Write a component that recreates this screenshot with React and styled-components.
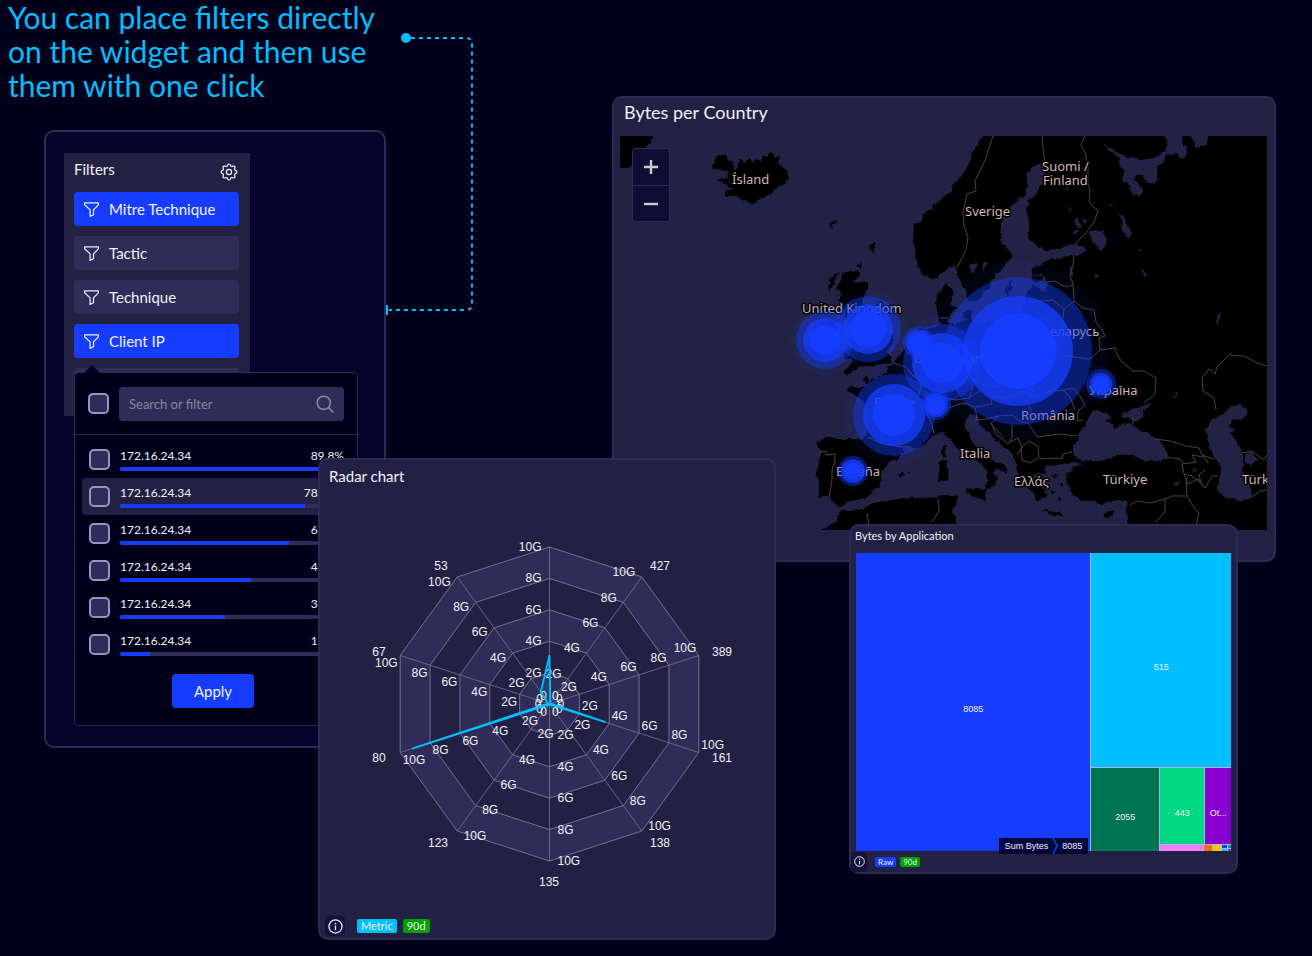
import React from "react";
import styled, { createGlobalStyle, css } from "styled-components";

const color = {
  page: "#01001a",
  frame: "#04042d",
  panel: "#222144",
  raised: "#2f2d57",
  line: "#2d2b56",
  blue: "#163dff",
  cyan: "#00bfff",
  green: "#00a000",
  check: "#8f9ac4",
  text: "#f1f1f7",
  mute: "#86859f",
};

const GlobalStyle = createGlobalStyle`
  *, *::before, *::after { box-sizing: border-box; }
  body {
    margin: 0;
    min-height: 100vh;
    background: ${color.page};
    color: ${color.text};
    font-family: Lato, "Open Sans", sans-serif;
  }
  button, input { font: inherit; color: inherit; }
  h1, h2, ul { margin: 0; padding: 0; font-weight: 400; }
`;

/* Overlapping panels share one grid; spans decide where they stack. */
const Stage = styled.main`
  display: grid;
  grid-template-columns:
    minmax(0, 44fr) minmax(0, 274fr) minmax(0, 68fr) minmax(0, 226fr) minmax(0, 164fr)
    minmax(0, 73fr) minmax(0, 389fr) minmax(0, 38fr) minmax(0, 36fr);
  grid-template-rows: 96px 34px 328px 66px 38px 186px 126px 66px;
  padding-bottom: 16px;
`;

const Headline = styled.h1`
  grid-column: 1 / 5;
  grid-row: 1 / 3;
  padding: 0 8px;
  font-size: 30px;
  line-height: 34px;
  white-space: pre-line;
  color: ${color.cyan};
`;

const Card = styled.section`
  display: flex;
  flex-direction: column;
  min-width: 0;
  border: 2px solid ${color.line};
  border-radius: 10px;
  background: ${color.panel};
`;

const FilterCard = styled(Card)`
  grid-column: 2 / 4;
  grid-row: 3 / 7;
  position: relative;
  align-items: flex-start;
  padding: 21px 18px;
  background: ${color.frame};
`;

const MapCard = styled(Card)`
  grid-column: 5 / 9;
  grid-row: 2 / 6;
  padding: 0 7px 30px 6px;
`;

const RadarCard = styled(Card)`
  grid-column: 3 / 6;
  grid-row: 4 / 9;
  z-index: 2;
`;

const TreeCard = styled(Card)`
  grid-column: 7 / 8;
  grid-row: 5 / 8;
  z-index: 2;
`;

const CardTitle = styled.h2`
  flex: none;
  height: ${(p) => p.$height}px;
  padding: 0 ${(p) => p.$inset}px;
  font-size: ${(p) => p.$size}px;
  line-height: ${(p) => p.$line}px;
`;

const Connector = styled.svg`
  position: absolute;
  left: 100%;
  top: -102px;
  width: 92px;
  height: 292px;
  pointer-events: none;
`;

/* ---------- filters ---------- */

const Sidebar = styled.div`
  position: relative;
  display: flex;
  flex-direction: column;
  gap: 10px;
  width: 186px;
  height: 263px;
  padding: 7px 11px 0 10px;
  background: ${color.panel};
`;

const SidebarHead = styled.div`
  display: flex;
  justify-content: space-between;
  align-items: flex-start;
  height: 22px;
`;

const SidebarTitle = styled.h2`
  font-size: 15px;
  line-height: 18px;
`;

const IconButton = styled.button`
  display: grid;
  place-items: center;
  width: ${(p) => (p.$small ? 16 : 20)}px;
  height: 20px;
  margin-top: 2px;
  padding: 0;
  border: 0;
  border-radius: 4px;
  background: ${(p) => (p.$dark ? "#141238" : "none")};
`;

const FilterButton = styled.button`
  flex: none;
  display: flex;
  align-items: center;
  gap: 10px;
  height: 34px;
  padding: 0 10px;
  border: 0;
  border-radius: 4px;
  background: ${(p) => (p.$active ? color.blue : color.raised)};
  font-size: 15px;
  line-height: 18px;
  text-align: left;
`;

const FilterStub = styled.div`
  flex: none;
  height: 34px;
  border-radius: 4px;
  background: ${color.raised};
`;

const Popover = styled.div`
  position: absolute;
  left: 10px;
  top: 219px;
  width: 284px;
  height: 354px;
  display: flex;
  flex-direction: column;
  border: 1px solid ${color.line};
  border-radius: 5px;
  background: ${color.page};
`;

const Pointer = styled.svg`
  position: absolute;
  left: 8px;
  top: -8px;
  width: 18px;
  height: 9px;
`;

const SearchRow = styled.div`
  display: flex;
  align-items: center;
  gap: 10px;
  height: 62px;
  padding: 0 13px;
  border-bottom: 1px solid ${color.line};
`;

const Check = styled.input.attrs({ type: "checkbox" })`
  appearance: none;
  flex: none;
  width: 21px;
  height: 21px;
  margin: 0;
  border: 2px solid ${color.check};
  border-radius: 5px;
  background: ${color.raised};
  &:checked { background: ${color.blue}; }
`;

const SearchBox = styled.label`
  flex: 1;
  display: flex;
  align-items: center;
  height: 34px;
  padding: 0 10px;
  border-radius: 4px;
  background: ${color.raised};
`;

const SearchInput = styled.input`
  flex: 1;
  min-width: 0;
  padding: 0;
  border: 0;
  outline: 0;
  background: none;
  font-size: 13px;
  &::placeholder { color: ${color.mute}; opacity: 1; }
`;

const IpList = styled.ul`
  list-style: none;
  padding: 6px 0 0 7px;
`;

const IpRow = styled.li`
  display: flex;
  align-items: center;
  gap: 10px;
  height: 37px;
  padding: 0 13px 0 7px;
  border-radius: 4px;
  ${(p) => p.$hover && css`background: ${color.panel};`}
`;

const IpBody = styled.label`
  flex: 1;
  display: flex;
  flex-direction: column;
  gap: 4px;
  font-size: 12px;
  line-height: 14px;
`;

const IpText = styled.span`
  display: flex;
  justify-content: space-between;
`;

const Track = styled.span`
  display: block;
  height: 4px;
  border-radius: 2px;
  background: ${color.raised};
`;

const Fill = styled.span`
  display: block;
  height: 4px;
  border-radius: 2px 0 0 2px;
  background: ${color.blue};
`;

const ApplyButton = styled.button`
  width: 82px;
  height: 34px;
  margin: 11px 0 0 97px;
  padding: 0;
  border: 0;
  border-radius: 4px;
  background: ${color.blue};
  font-size: 15px;
`;

/* ---------- map ---------- */

const MapFrame = styled.div`
  flex: 1;
  position: relative;
  min-height: 0;
  overflow: hidden;
`;

const MapSvg = styled.svg`
  display: block;
  width: 100%;
  height: 100%;
`;

const Zoom = styled.div`
  position: absolute;
  left: 12px;
  top: 12px;
  display: flex;
  flex-direction: column;
  width: 38px;
  border: 1px solid ${color.line};
  border-radius: 3px;
  background: #100d35;
`;

const ZoomButton = styled.button`
  display: grid;
  place-items: center;
  height: 36px;
  padding: 0;
  border: 0;
  background: none;
  & + & { border-top: 1px solid ${color.line}; }
`;

const Place = styled.text`
  font-family: "Noto Sans", sans-serif;
  font-size: 13px;
  fill: #cfb6b3;
  stroke: #000;
  stroke-width: 3px;
  stroke-linejoin: round;
  paint-order: stroke;
`;

/* ---------- charts ---------- */

const RadarSvg = styled.svg`
  flex: 1;
  min-height: 0;
  width: 100%;
  font-family: "Liberation Sans", Arial, sans-serif;
  font-size: 12px;
  fill: ${color.text};
`;

const CardFooter = styled.footer`
  flex: none;
  display: flex;
  align-items: center;
  gap: ${(p) => p.$gap}px;
  height: ${(p) => p.$height}px;
  padding: 0 ${(p) => p.$inset}px;
  & ${IconButton} { margin: 0 ${(p) => p.$gap}px 0 0; }
`;

const Tag = styled.span`
  height: ${(p) => (p.$small ? 10 : 14)}px;
  padding: 0 ${(p) => (p.$small ? 3 : 4)}px;
  border-radius: 2px;
  background: ${(p) => p.$fill};
  font-size: ${(p) => (p.$small ? 8 : 11)}px;
  line-height: ${(p) => (p.$small ? 10 : 14)}px;
`;

const TreeMap = styled.div`
  flex: 1;
  position: relative;
  display: grid;
  grid-template-columns: 235fr 140fr;
  gap: 1px;
  min-height: 0;
  margin: 0 5px;
  background: #a9b6f2;
  font-family: "Liberation Sans", Arial, sans-serif;
  font-size: 9px;
`;

const Split = styled.div`
  display: grid;
  grid-template-columns: ${(p) => p.$columns || "none"};
  grid-template-rows: ${(p) => p.$rows || "none"};
  gap: 1px;
  min-width: 0;
  min-height: 0;
`;

const Tile = styled.div`
  display: grid;
  place-items: center;
  min-width: 0;
  min-height: 0;
  padding-top: ${(p) => (p.$lead ? 14 : 0)}px;
  background: ${(p) => p.$fill};
`;

const Crumb = styled.div`
  position: absolute;
  left: 143px;
  bottom: -3px;
  display: flex;
  align-items: center;
  justify-content: center;
  gap: 4px;
  width: 89px;
  height: 16px;
  white-space: nowrap;
  background: rgba(3, 3, 50, 0.92);
`;

/* ---------- icons ---------- */

const Funnel = () => (
  <svg width="15" height="15" viewBox="0 0 15 15" fill="none" stroke="#eef0ff" strokeWidth="1.2" strokeLinejoin="round">
    <path d="M.6.8h13.8v2L9.5 7.9v4.8l-3.4 1.7V7.9L.6 2.8z" />
  </svg>
);

const gearPath =
  Array.from({ length: 64 }, (_, i) => {
    const a = (i / 64) * Math.PI * 2;
    const r = 7 + Math.max(-0.8, Math.min(0.8, Math.cos(a * 8) * 1.3));
    return `${i ? "L" : "M"}${(9 + r * Math.sin(a)).toFixed(2)} ${(9 - r * Math.cos(a)).toFixed(2)}`;
  }).join("") + "Z";

const Gear = () => (
  <svg width="18" height="18" viewBox="0 0 18 18" fill="none" stroke="#eef0ff" strokeWidth="1.2" strokeLinejoin="round">
    <path d={gearPath} />
    <circle cx="9" cy="9" r="2.6" />
  </svg>
);

const Magnifier = () => (
  <svg width="18" height="18" viewBox="0 0 18 18" fill="none" stroke={color.mute} strokeWidth="1.6" strokeLinecap="round">
    <circle cx="7.8" cy="7.8" r="6.6" />
    <path d="M12.6 12.6 17 17" />
  </svg>
);

const Info = ({ size }) => (
  <svg width={size} height={size} viewBox="0 0 16 16" fill="none" stroke="#eef0ff" strokeWidth="1.4">
    <circle cx="8" cy="8" r="7" />
    <path d="M8 7v5M8 4v1.6" />
  </svg>
);

/* ---------- data ---------- */

const filters = [
  { label: "Mitre Technique", active: true },
  { label: "Tactic" },
  { label: "Technique" },
  { label: "Client IP", active: true },
];

const addresses = [
  { share: "89.8%", bar: 92 },
  { share: "78.14%", bar: 82.6, hover: true },
  { share: "67.1%", bar: 75.4 },
  { share: "45.1%", bar: 58.7 },
  { share: "33.2%", bar: 47 },
  { share: "11.1%", bar: 13.4 },
];

const continent =
  "M982 120V136L978 145 972 153 970 163 965 170 960 178 953 185 950 193 943 198 935 203 932 209 925 213 921 220 915 223 913 240 915 249 916 257 918 266 920 272 926 277 932 279 938 277 943 272 949 267 955 265 957 273 960 280 963 288 967 293 968 301 976 301 983 294 989 288 992 280 998 273 1003 268 1007 263 1012 258 1012 255 1007 249 1002 243 1000 235 1001 227 1004 216 1010 207 1016 203 1020 197 1026 194 1027 187 1027 180 1028 173 1032 167 1037 165 1042 165 1046 168 1045 180 1041 187 1037 193 1031 198 1027 205 1028 214 1029 223 1029 230 1028 237 1032 243 1037 247 1046 250 1053 250 1060 248 1067 246 1075 244 1080 246 1087 250 1080 254 1073 256 1065 257 1057 258 1050 259 1043 263 1039 267 1040 272 1044 277 1048 282 1047 290 1042 291 1035 285 1028 290 1026 297 1025 303 1022 313 1010 316 1000 318 990 320 980 323 970 319 962 322 955 325 948 322 950 314 957 309 951 304 953 290 946 284 938 293 936 304 938 315 941 324 933 328 925 328 918 330 912 336 907 345 900 355 895 362 888 368 885 373 876 378 870 381 866 376 863 378 866 386 858 388 850 386 848 390 852 394 860 398 866 405 869 413 868 422 866 435 862 440 850 439 838 439 830 437 824 438 818 441 818 446 821 452 819 462 816 475 819 482 819 497 829 497 833 501 838 506 843 506 848 501 857 500 866 497 872 492 880 487 881 481 880 475 884 468 889 463 897 459 903 452 903 445 908 446 917 448 925 444 930 438 936 434 942 432 948 436 952 443 958 449 967 456 975 460 982 464 986 471 989 480 985 487 989 489 994 484 997 478 993 473 997 468 1003 470 1008 473 1007 468 1000 463 992 460 985 455 978 449 972 442 969 435 966 428 965 420 971 414 977 417 979 424 986 431 993 438 1001 444 1009 450 1016 459 1016 468 1020 477 1025 483 1029 489 1034 493 1036 501 1042 497 1048 499 1046 491 1039 484 1034 477 1037 472 1045 474 1044 467 1052 465 1060 463 1067 465 1075 463 1072 470 1067 473 1066 480 1070 487 1071 494 1077 498 1085 502 1091 500 1100 504 1110 502 1119 500 1128 500 1127 510 1128 519 1125 530V545H1285V120Z";

const islands = [
  "M605 120H652V136L649 145 640 150 634 160 627 168 605 169Z",
  "M712 168L718 155 725 155 728 160 734 162 734 170 737 168 740 159 745 163 749 157 753 162 757 159 762 163 762 156 768 157 767 153 773 153 775 158 780 155 779 163 787 170 788 177 785 184 778 187 772 193 761 198 753 204 742 200 734 196 725 196 725 192 732 190 728 185 717 181 718 179 728 177 727 171 720 170Z",
  "M829 223L836 220 837 222 833 225 834 232 832 228Z",
  "M873 242L876 242 873 253 869 249Z",
  "M858 265L862 263 861 269 857 268Z",
  "M843 272L858 271 860 275 852 282 868 283 868 290 862 301 868 311 877 322 882 331 893 335 893 345 886 352 891 358 890 363 877 365 860 367 848 374 842 372 850 365 856 361 845 358 844 353 852 346 848 338 856 331 853 322 845 319 846 309 838 300 841 292 836 290Z",
  "M830 280L838 273 836 281 831 287 829 294Z",
  "M812 329L822 322 834 321 840 333 837 349 825 356 812 358 806 352 811 342Z",
  "M962 312L972 309 971 319 963 319Z",
  "M1006 289L1012 280 1012 288 1006 298Z",
  "M1032 268L1041 265 1040 273 1034 277Z M1031 278L1042 275 1043 280 1034 283Z",
  "M942 447L946 443 947 455 942 458Z",
  "M939 462L947 460 948 468 947 480 939 482Z",
  "M966 489L976 490 987 488 986 496 986 501 977 497 966 492Z",
  "M898 475L904 471 905 474 901 478Z M908 472L911 473 909 474Z M889 481L891 481 890 483Z",
  "M822 545V530L830 525 837 521 840 510 848 511 858 510 870 505 883 502 897 499 912 497 925 499 937 497 947 495 957 497 956 505 951 512 957 520 956 545Z",
  "M1042 510L1050 511 1062 513 1062 515 1050 515Z",
  "M1103 514L1109 512 1116 509 1113 515 1106 518Z",
  "M1052 474L1058 475 1054 479Z M1059 484L1063 482 1061 487Z M1051 490L1056 492 1052 495Z M1058 497L1062 499 1059 501Z",
];

const seas = [
  "M1097 410L1105 412 1111 418 1105 421 1113 424 1113 428 1118 427 1128 423 1134 425 1139 430 1148 434 1158 440 1166 448 1168 455 1165 460 1158 462 1150 460 1142 460 1135 456 1128 454 1118 455 1110 459 1100 461 1088 461 1078 459 1073 454 1073 446 1077 440 1078 433 1084 428 1088 418 1092 411Z",
  "M1121 414L1130 409 1138 408 1150 403 1149 407 1143 411 1143 417 1136 422 1128 418 1121 418Z",
  "M1069 465L1075 462 1083 464 1077 467Z",
  "M1230 406L1240 405 1248 408 1247 414 1241 420 1233 420 1228 427 1235 429 1231 433 1235 441 1240 446 1243 455 1243 463 1242 470 1250 484 1252 497 1240 501 1228 498 1219 492 1217 485 1221 477 1222 467 1216 459 1210 449 1208 440 1205 430 1212 420 1222 415Z",
  "M1245 455L1251 451 1257 460 1250 465 1245 462Z",
  "M1103 143L1117 152 1128 157 1140 160 1153 158 1164 152 1168 146 1165 136V120H1182L1182 145 1187 146 1185 157 1180 159 1177 153 1167 155 1162 164 1157 167 1158 180 1152 184 1145 181 1142 175 1136 175 1135 180 1142 190 1140 197 1132 193 1130 186 1122 180 1124 172 1119 165 1120 158 1110 151Z",
  "M1190 120H1210L1208 145 1197 147 1190 136Z",
  "M1088 232L1096 230 1103 232 1107 240 1103 252 1098 249 1093 243Z",
  "M1118 213L1124 217 1127 225 1132 233 1128 239 1121 229 1123 222Z",
  "M969 264L978 262 976 271 971 273Z M983 264L988 261 984 272Z M1069 268L1072 266 1072 279 1070 275Z",
  "M1140 268L1145 272 1149 275 1145 277Z M1094 274L1099 275 1096 278Z M1110 204L1114 203 1112 207Z M1138 249L1142 250 1139 252Z",
  "M1074 220L1078 217 1081 226 1077 229Z M1082 218L1088 221 1084 225Z M1072 231L1080 230 1076 234Z M1063 189L1070 187 1067 190Z M1070 206L1073 212 1070 211Z",
  "M1216 318L1223 311 1221 315 1217 326Z M1171 397L1178 391 1177 396Z M1173 484L1180 481 1178 486Z M1193 467L1196 470 1194 473Z",
];

const borders = [
  "M993 136L985 160 975 181 976 191 967 194 963 213 964 226 968 237 966 250 957 268",
  "M1042 136L1044 158 1047 165",
  "M1085 136L1081 145 1086 155 1088 170 1088 183 1090 192 1089 202 1098 211 1094 222 1085 234 1075 244",
  "M1074 256L1073 265 1070 276 1073 284 1068 287 1061 285 1055 281 1047 282",
  "M1073 284L1074 301 1083 308 1094 310 1096 322 1102 330 1105 336 1099 338 1100 350",
  "M1028 302L1043 301 1053 300 1064 309 1074 301 M1064 309L1062 325 1055 341 1060 355 1090 359 1100 350 1115 348 1118 356 1122 362 1133 371 1144 371 1156 378 1155 394 1144 403",
  "M1024 318L1040 320 1053 316",
  "M893 363L906 367 913 376 922 382 M913 376L923 368 918 356 923 340",
  "M922 382L918 397 925 403 932 400 945 398 956 400 969 398 983 389 990 396 M969 398L973 386 966 376 983 385 997 387 1010 381",
  "M934 434L932 424 927 414 926 404 M932 400L942 410 954 406 963 403 975 407 977 419",
  "M868 437L880 443 890 445 902 447",
  "M820 452L826 451 826 455 835 454 835 461 832 470 832 480 829 497",
  "M976 407L992 404 990 396 1008 398 1020 393 1034 389 M975 420L987 419 998 416 1012 415 M991 422L996 434 1008 444 1012 438 1012 425 M998 416L991 424 1004 438",
  "M1012 415L1020 421 1028 423 1034 432 1037 437 1060 434 1077 436 M1034 389L1027 402 1032 412 1030 422",
  "M1020 391L1040 397 1050 391 1063 390 1073 388 1080 396 1085 405 1078 411 1077 421 1083 420 M1063 390L1070 397 1075 410",
  "M1022 447L1029 441 1038 446 1039 457 1030 463 1022 460 1021 450Z M1010 442L1018 438 1022 447 1017 455 M1039 459L1053 458 1062 459 1063 454 1072 452",
  "M1155 439L1170 441 1186 446 1199 448 1202 455 1214 459 M1166 457L1180 459 1183 464 1196 462 1192 455 1204 457 1208 463 M1182 464L1184 474 1192 476 1201 483 1199 475 1205 470 M1184 474L1188 484 1198 479 1205 488 1212 476 1218 476",
  "M1130 505L1137 501 1150 503 1165 499 1172 496 1187 496 1186 481 1188 477 M1187 496L1194 508 1199 513 1195 530 M1165 499L1165 512 1155 523",
  "M1216 410L1214 398 1203 391 1202 378 1209 369 1215 374 1217 367 1229 355 1244 356 1257 363 1267 366",
  "M1242 453L1252 451 1257 455 1264 460 1267 455 M1252 497L1260 491 1267 490",
  "M938 499L939 511 932 522 M867 513L869 527 M940 318L948 318 M1133 418V424",
];

const places = [
  [732, 184, "Ísland"],
  [1042, 171, "Suomi /"],
  [1043, 185, "Finland"],
  [965, 216, "Sverige"],
  [802, 313, "United Kingdom"],
  [1042, 336, "Беларусь"],
  [1089, 395, "Україна"],
  [1021, 420, "România"],
  [960, 458, "Italia"],
  [1014, 486, "Ελλάς"],
  [1103, 484, "Türkiye"],
  [1242, 484, "Türk"],
  [836, 476, "España"],
  [914, 363, "Deutschland"],
  [874, 407, "France"],
];

/* centre x, centre y, then the core, middle and outer radii */
const bubbles = [
  [825, 340, 15, 22, 29],
  [868, 329, 18, 25, 33],
  [919, 343, 10, 13, 16],
  [942, 363, 20, 30, 39],
  [894, 415, 21, 31, 41],
  [936, 405, 9, 12, 15],
  [1018, 351, 38, 55, 74],
  [853, 471, 8, 12, 15],
  [1101, 384, 8, 11, 15],
];

const radar = { cx: 549.5, cy: 704, r: 157 };
const ticks = [0, 2, 4, 6, 8, 10];
const radarValues = [3.1, 0.1, 0.1, 3.75, 0.05, 0.05, 0.05, 9.2, 0.1, 0.95];
const radarNames = [
  [660, 570, "427"],
  [722, 656, "389"],
  [722, 762, "161"],
  [660, 847, "138"],
  [549, 886, "135"],
  [438, 847, "123"],
  [379, 762, "80"],
  [379, 656, "67"],
  [441, 570, "53"],
];

const radarPoint = (axis, value) => {
  const a = (axis * Math.PI) / 5;
  const d = (radar.r * value) / 10;
  return [radar.cx + d * Math.sin(a), radar.cy - d * Math.cos(a)];
};
const ring = (value) => radarValues.map((_, i) => radarPoint(i, value).join()).join(" ");

/* ---------- views ---------- */

function Filters() {
  return (
    <FilterCard aria-label="Filters">
      <Sidebar>
        <SidebarHead>
          <SidebarTitle>Filters</SidebarTitle>
          <IconButton aria-label="Filter settings"><Gear /></IconButton>
        </SidebarHead>
        {filters.map((f) => (
          <FilterButton key={f.label} $active={f.active}>
            <Funnel />
            {f.label}
          </FilterButton>
        ))}
        <FilterStub />
        <Popover>
          <Pointer viewBox="0 0 18 9"><path d="M0 9 9 0l9 9z" fill={color.page} /></Pointer>
          <SearchRow>
            <Check aria-label="Select all" />
            <SearchBox>
              <SearchInput aria-label="Search or filter" placeholder="Search or filter" />
              <Magnifier />
            </SearchBox>
          </SearchRow>
          <IpList>
            {addresses.map((row, i) => (
              <IpRow key={row.share} $hover={row.hover}>
                <Check id={`ip-${i}`} />
                <IpBody htmlFor={`ip-${i}`}>
                  <IpText><span>172.16.24.34</span><span>{row.share}</span></IpText>
                  <Track><Fill style={{ width: `${row.bar}%` }} /></Track>
                </IpBody>
              </IpRow>
            ))}
          </IpList>
          <ApplyButton>Apply</ApplyButton>
        </Popover>
      </Sidebar>
      <Connector viewBox="384 30 92 292" fill="none" stroke={color.cyan} strokeWidth="2">
        <circle cx="406" cy="38" r="5" fill={color.cyan} stroke="none" />
        <path d="M411 38H466Q472 38 472 44V304Q472 310 466 310H389" strokeDasharray="4 4" />
        <path d="M387 305v10" />
      </Connector>
    </FilterCard>
  );
}

function CountryMap() {
  return (
    <MapCard>
      <CardTitle $height={38} $inset={4} $size={18} $line={28}>Bytes per Country</CardTitle>
      <MapFrame>
        <MapSvg viewBox="620 136 647 394" preserveAspectRatio="xMidYMid slice" role="img" aria-label="Map of Europe">
          <defs>
            <filter id="coast" filterUnits="userSpaceOnUse" x="600" y="116" width="690" height="434">
              <feTurbulence type="fractalNoise" baseFrequency="0.16" numOctaves="2" seed="4" />
              <feDisplacementMap in="SourceGraphic" scale="5" xChannelSelector="R" yChannelSelector="G" />
            </filter>
          </defs>
          <g filter="url(#coast)">
            <rect x="600" y="116" width="690" height="434" fill={color.panel} />
            <path d={continent} />
            {islands.map((d) => <path key={d} d={d} />)}
            {seas.map((d) => <path key={d} d={d} fill={color.panel} />)}
          </g>
          {borders.map((d) => <path key={d} d={d} fill="none" stroke="#5c463f" strokeWidth="0.9" />)}
          {places.map(([x, y, name]) => <Place key={name} x={x} y={y}>{name}</Place>)}
          {bubbles.map(([x, y, core, mid, outer]) => (
            <g key={x} fill={color.blue}>
              <circle cx={x} cy={y} r={outer * 1.22} opacity="0.06" />
              <circle cx={x} cy={y} r={outer} opacity="0.42" />
              <circle cx={x} cy={y} r={mid} opacity="0.75" />
              <circle cx={x} cy={y} r={core} />
            </g>
          ))}
        </MapSvg>
        <Zoom>
          <ZoomButton aria-label="Zoom in">
            <svg width="14" height="14" stroke="#ccc" strokeWidth="2.4"><path d="M0 7h14M7 0v14" /></svg>
          </ZoomButton>
          <ZoomButton aria-label="Zoom out">
            <svg width="14" height="14" stroke="#ccc" strokeWidth="2.4"><path d="M0 7h14" /></svg>
          </ZoomButton>
        </Zoom>
      </MapFrame>
    </MapCard>
  );
}

function Radar() {
  return (
    <RadarCard>
      <CardTitle $height={32} $inset={9} $size={15} $line={32}>Radar chart</CardTitle>
      <RadarSvg viewBox="320 492 454 422" role="img" aria-label="Radar chart">
        {ticks.slice(1).reverse().map((t) => (
          <polygon
            key={t}
            points={ring(t)}
            fill={t % 4 === 2 ? color.raised : color.panel}
            stroke="#8583a3"
            strokeWidth="0.8"
          />
        ))}
        {radarValues.map((_, i) => {
          const [x, y] = radarPoint(i, 10);
          return <line key={i} x1={radar.cx} y1={radar.cy} x2={x} y2={y} stroke="#77768f" strokeWidth="0.8" />;
        })}
        {radarValues.map((_, i) =>
          ticks.map((t) => {
            const [x, y] = radarPoint(i, t);
            const a = (i * Math.PI) / 5;
            return (
              <text
                key={`${i}-${t}`}
                x={x - 8 * Math.cos(a)}
                y={y - 8 * Math.sin(a) + 4}
                textAnchor={Math.cos(a) > 0 ? "end" : "start"}
              >
                {t ? `${t}G` : "0"}
              </text>
            );
          })
        )}
        {radarNames.map(([x, y, name]) => (
          <text key={name} x={x} y={y} textAnchor="middle">{name}</text>
        ))}
        <polygon
          points={radarValues.map((v, i) => radarPoint(i, v).join()).join(" ")}
          fill={color.cyan}
          fillOpacity="0.15"
          stroke={color.cyan}
          strokeWidth="1.8"
          strokeLinejoin="bevel"
        />
      </RadarSvg>
      <CardFooter $height={24} $gap={6} $inset={5}>
        <IconButton $dark aria-label="Radar chart details"><Info size={15} /></IconButton>
        <Tag $fill={color.cyan}>Metric</Tag>
        <Tag $fill={color.green}>90d</Tag>
      </CardFooter>
    </RadarCard>
  );
}

function Applications() {
  return (
    <TreeCard>
      <CardTitle $height={27} $inset={4} $size={11} $line={20}>Bytes by Application</CardTitle>
      <TreeMap>
        <Tile $fill={color.blue} $lead>8085</Tile>
        <Split $rows="214fr 83fr">
          <Tile $fill={color.cyan} $lead>515</Tile>
          <Split $columns="68fr 71fr">
            <Tile $fill="#007552" $lead>2055</Tile>
            <Split $rows="76fr 6fr">
              <Split $columns="45fr 26fr">
                <Tile $fill="#00d982" $lead>443</Tile>
                <Tile $fill="#8800cf" $lead>Ot...</Tile>
              </Split>
              <Split $columns="43fr 8fr 8fr 5fr 3fr">
                <Tile $fill="#f07cff" />
                <Tile $fill="#ff6d00" />
                <Tile $fill="#ffc400" />
                <Split $rows="1fr 1fr">
                  <Tile $fill={color.blue} />
                  <Tile $fill={color.cyan} />
                </Split>
                <Split $rows="1fr 1fr">
                  <Tile $fill="#00a870" />
                  <Tile $fill="#5a3fd0" />
                </Split>
              </Split>
            </Split>
          </Split>
        </Split>
        <Crumb>
          <span>Sum Bytes</span>
          <svg width="6" height="16" fill="none" stroke={color.blue} strokeWidth="1.4"><path d="M1 0 5 8 1 16" /></svg>
          <span>8085</span>
        </Crumb>
      </TreeMap>
      <CardFooter $height={21} $gap={4} $inset={0}>
        <IconButton $dark $small aria-label="Bytes by Application details"><Info size={11} /></IconButton>
        <Tag $small $fill={color.blue}>Raw</Tag>
        <Tag $small $fill={color.green}>90d</Tag>
      </CardFooter>
    </TreeCard>
  );
}

export default function App() {
  return (
    <>
      <GlobalStyle />
      <Stage>
        <Headline>{"You can place filters directly\non the widget and then use\nthem with one click"}</Headline>
        <Filters />
        <CountryMap />
        <Radar />
        <Applications />
      </Stage>
    </>
  );
}
